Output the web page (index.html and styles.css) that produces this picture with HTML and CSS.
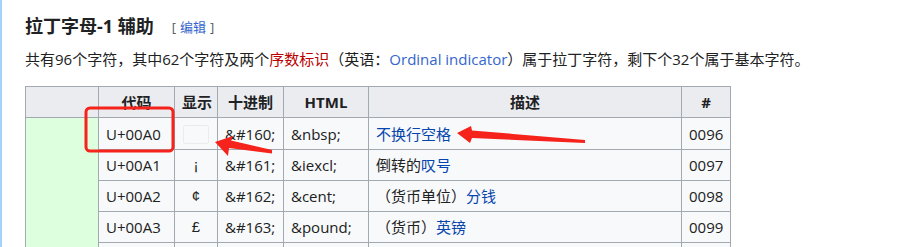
FILE: index.html
```html
<!DOCTYPE html>
<html lang="zh">
<head>
<meta charset="utf-8">
<link rel="stylesheet" href="styles.css">
</head>
<body>
<div class="page">
  <h2 class="title">拉丁字母-1 辅助<span class="edit"><span class="br">[</span><a class="editlink">编辑</a><span class="br">]</span></span></h2>
  <p class="intro">共有96个字符，其中62个字符及两个<a class="red">序数标识</a>（英语：<a class="ext">Ordinal indicator</a>）属于拉丁字符，剩下个32个属于基本字符。</p>
  <table class="chars">
    <tr class="head">
      <th class="c1"></th>
      <th class="c2">代码</th>
      <th class="c3">显示</th>
      <th class="c4">十进制</th>
      <th class="c5">HTML</th>
      <th class="c6">描述</th>
      <th class="c7">#</th>
    </tr>
    <tr class="first">
      <td class="green" rowspan="5"></td>
      <td>U+00A0</td>
      <td class="ctr"><span class="blank"></span></td>
      <td>&amp;#160;</td>
      <td>&amp;nbsp;</td>
      <td><a>不换行空格</a></td>
      <td class="ctr">0096</td>
    </tr>
    <tr>
      <td>U+00A1</td>
      <td class="ctr sym">¡</td>
      <td>&amp;#161;</td>
      <td>&amp;iexcl;</td>
      <td>倒转的<a>叹号</a></td>
      <td class="ctr">0097</td>
    </tr>
    <tr>
      <td>U+00A2</td>
      <td class="ctr sym">¢</td>
      <td>&amp;#162;</td>
      <td>&amp;cent;</td>
      <td>（货币单位）<a>分钱</a></td>
      <td class="ctr">0098</td>
    </tr>
    <tr>
      <td>U+00A3</td>
      <td class="ctr sym">£</td>
      <td>&amp;#163;</td>
      <td>&amp;pound;</td>
      <td>（货币）<a>英镑</a></td>
      <td class="ctr">0099</td>
    </tr>
    <tr class="empty">
      <td></td>
      <td></td>
      <td></td>
      <td></td>
      <td></td>
      <td></td>
    </tr>
  </table>
</div>
<svg class="marks" width="916" height="247" viewBox="0 0 916 247">
  <rect x="86" y="108" width="87" height="43" rx="4" ry="4" fill="none" stroke="#f5231b" stroke-width="3"/>
  <polygon points="215,142 233,136 231,140.5 272,150 272,153.5 229,148 228,156" fill="#f5231b"/>
  <polygon points="457,133 471,126 472,130.5 585,140 585,143 472,138 470,143" fill="#f5231b"/>
</svg>
</body>
</html>
```

FILE: styles.css
```css
html, body {
  margin: 0;
  padding: 0;
  background: #fff;
}

body {
  font-family: "Open Sans", "Noto Sans CJK SC", sans-serif;
  color: #202122;
  width: 916px;
  height: 247px;
  overflow: hidden;
  position: relative;
}

.page {
  border-left: 2px solid #a3d3fb;
  padding-left: 23px;
  height: 247px;
  box-sizing: border-box;
}

.title {
  margin: 0;
  padding-top: 13px;
  font-size: 18px;
  line-height: 26px;
  font-weight: bold;
  color: #202122;
}

.edit {
  font-size: 13px;
  font-weight: normal;
  margin-left: 14px;
  vertical-align: 1px;
}

.edit .br {
  color: #54595d;
  margin: 0 4px;
}

.editlink {
  color: #3366cc;
}

.intro {
  margin: 8px 0 0;
  font-size: 15px;
  line-height: 22px;
}

.intro .red {
  color: #ba0000;
}

.intro .ext {
  color: #3366cc;
}

.chars {
  margin-top: 16px;
  border-collapse: collapse;
  table-layout: fixed;
  width: 706px;
  font-size: 15px;
  background: #f8f9fa;
  color: #202122;
}

.chars th,
.chars td {
  box-sizing: border-box;
  border: 1px solid #a2a9b1;
  padding: 0 7px;
  line-height: 20px;
  text-align: left;
  white-space: nowrap;
  overflow: hidden;
}

.chars th {
  background: #eaecf0;
  text-align: center;
  font-weight: bold;
  height: 31px;
}

.chars td a {
  color: #0645ad;
}

.chars td.ctr {
  text-align: center;
}

.chars td.sym {
  font-family: "Liberation Sans", sans-serif;
}

.chars td.green {
  background: #ddffdd;
}

.c1 { width: 73px; }
.c2 { width: 76px; }
.c3 { width: 43px; }
.c4 { width: 66px; }
.c5 { width: 85px; }
.c6 { width: 313px; }
.c7 { width: 49px; }

.chars tr td {
  height: 31px;
}

.chars tr.first td {
  height: 32px;
}

.blank {
  display: inline-block;
  width: 24px;
  height: 17px;
  border: 1px solid #eaecf0;
  border-radius: 2px;
  background: #f8f9fa;
  vertical-align: middle;
}

.marks {
  position: absolute;
  left: 0;
  top: 0;
  pointer-events: none;
}
```
